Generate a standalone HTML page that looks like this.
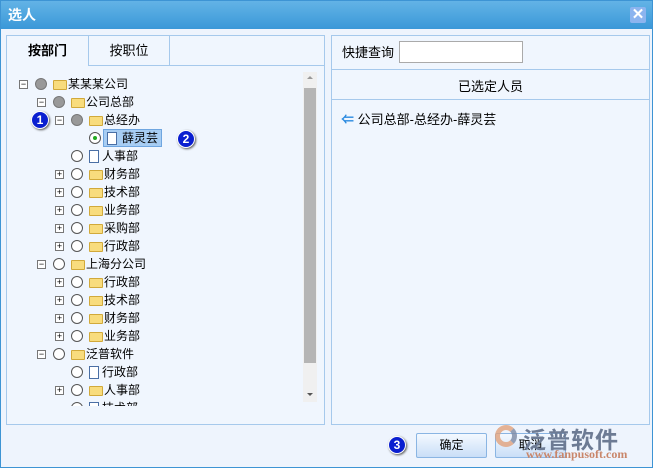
<!DOCTYPE html>
<html><head><meta charset="utf-8"><style>
*{margin:0;padding:0;box-sizing:border-box}
body{width:653px;height:468px;overflow:hidden;font:12px "Liberation Sans","Noto Sans CJK SC",sans-serif;color:#000;background:#fff}
.win{position:absolute;left:0;top:0;width:653px;height:468px;border:1px solid #3d94d4;background:#eef4fd}
.title{position:absolute;left:0;top:0;width:651px;height:28px;background:linear-gradient(#63b3e6,#3a98d8);color:#fff;font-weight:bold;font-size:14px;line-height:28px;padding-left:7px}
.close{position:absolute;left:629px;top:6px;width:16px;height:16px;background:#8cb4ef;border-radius:2px;color:#fff;font-size:15px;line-height:16px;text-align:center;font-weight:bold}
.panel{position:absolute;border:1px solid #a6c9ec;background:#f0f6fe}
.tab{position:absolute;top:0;height:30px;line-height:30px;text-align:center;font-size:13px;color:#000}
.row{position:absolute;height:18px;line-height:18px;font-size:12px;white-space:nowrap}
.ex{position:absolute;width:9px;height:9px;border:1px solid #777;background:#fff;font-size:9px;line-height:7px;text-align:center;color:#000}
.c{position:absolute;width:12px;height:12px;border-radius:50%;border:1px solid #555;background:#fff}
.c.g{background:#999;border-color:#777}
.f{position:absolute;width:14px;height:10px;background:#f8dc7d;border:1px solid #d1a93a;border-radius:1px}
.d{position:absolute;width:10px;height:13px;background:#fff;border:1px solid #4a6fa5}
.badge{position:absolute;width:18px;height:18px;border-radius:50%;background:#0a1fd0;color:#fff;font-weight:bold;text-align:center;line-height:16px;border:1px solid #fff;box-shadow:1px 1px 2px #555;font-size:12px}
.btn{position:absolute;top:432px;width:71px;height:25px;border:1px solid #8ab5e3;border-radius:2px;background:linear-gradient(#f4f9ff,#c9def7);text-align:center;line-height:23px}
</style></head><body><div class="win">
<div class="title">选人</div><div class="close">✕</div>
<div class="panel" style="left:5px;top:34px;width:319px;height:390px">
 <div style="position:absolute;left:0;top:29px;width:317px;border-top:1px solid #a6c9ec"></div>
 <div class="tab" style="left:0;width:81px;font-weight:bold;background:#f0f6fe;height:31px">按部门</div>
 <div class="tab" style="left:81px;width:82px;border-left:1px solid #a6c9ec;border-right:1px solid #a6c9ec">按职位</div>
 <div style="position:absolute;left:296px;top:36px;width:14px;height:330px;background:#f0f0f0"></div>
 <div style="position:absolute;left:297px;top:52px;width:12px;height:275px;background:#b5b5b5"></div>
 <div style="position:absolute;left:300px;top:40px;border:3px solid transparent;border-bottom-color:#999;border-top:0"></div>
 <div style="position:absolute;left:300px;top:357px;border:3px solid transparent;border-top-color:#555;border-bottom:0"></div>
</div>
<div id="tree"></div>
<div class="panel" style="left:330px;top:34px;width:319px;height:390px">
 <div style="position:absolute;left:10px;top:6px;font-size:13px">快捷查询</div>
 <div style="position:absolute;left:67px;top:5px;width:124px;height:22px;border:1px solid #aaa;background:#fff"></div>
 <div style="position:absolute;left:0;top:33px;width:317px;border-top:1px solid #a6c9ec"></div>
 <div style="position:absolute;left:0;top:40px;width:317px;text-align:center;font-size:13px">已选定人员</div>
 <div style="position:absolute;left:0;top:63px;width:317px;border-top:1px solid #a6c9ec"></div>
 <div style="position:absolute;left:9px;top:73px;font-size:13px"><span style="color:#2a8ae0;font-weight:bold">⇐</span> 公司总部-总经办-薛灵芸</div>
</div>
<div class="badge" style="left:387px;top:435px">3</div>
<div class="btn" style="left:415px">确定</div>
<div class="btn" style="left:494px">取消</div>
<div style="position:absolute;left:522px;top:420px;font-size:23px;color:#6d7b94;font-weight:bold;letter-spacing:1px">泛普软件</div>
<div style="position:absolute;left:525px;top:446px;font-size:12px;color:#c9866a;font-family:'Liberation Serif',serif;font-weight:bold">www.fanpusoft.com</div>
<div style="position:absolute;left:494px;top:424px;width:22px;height:22px;border-radius:50%;border:5px solid #e2a27c;border-right-color:#7d8aa5;opacity:.8"></div>
<div class="badge" style="left:30px;top:110px">1</div>
<div class="badge" style="left:176px;top:129px">2</div>
</div>
<script>
var rows=[[0,'-','g','f','某某某公司'],[1,'-','g','f','公司总部'],[2,'-','g','f','总经办'],[3,'','s','d','薛灵芸'],[2,'','w','d','人事部'],[2,'+','w','f','财务部'],[2,'+','w','f','技术部'],[2,'+','w','f','业务部'],[2,'+','w','f','采购部'],[2,'+','w','f','行政部'],[1,'-','w','f','上海分公司'],[2,'+','w','f','行政部'],[2,'+','w','f','技术部'],[2,'+','w','f','财务部'],[2,'+','w','f','业务部'],[1,'-','w','f','泛普软件'],[2,'','w','d','行政部'],[2,'+','w','f','人事部'],[2,'','w','d','技术部']];
var h='';rows.forEach(function(r,i){var y=74+i*18;if(y>400)return;var x=18+r[0]*18;
if(r[1])h+='<div class="ex" style="left:'+(x)+'px;top:'+(y+5)+'px">'+(r[1]=='-'?'−':'+')+'</div>';
h+='<div class="c '+(r[2]=='g'?'g':'')+'" style="left:'+(x+16)+'px;top:'+(y+3)+'px">'+(r[2]=='s'?'<div style="width:4px;height:4px;margin:3px;border-radius:50%;background:#2a2"></div>':'')+'</div>';
h+='<div class="'+r[3]+'" style="left:'+(x+34)+'px;top:'+(y+(r[3]=='f'?5:3))+'px"></div>';
h+='<div class="row" style="left:'+(x+(r[3]=='f'?49:47))+'px;top:'+y+'px;'+(r[2]=='s'?'background:#a7cdf3;border:1px solid #6fa6e0;padding:0 3px;line-height:16px;left:'+(x+30)+'px;padding-left:18px':'')+'">'+r[4]+'</div>';});
var t=document.getElementById('tree');t.innerHTML=h;t.style.cssText='position:absolute;left:0;top:0;width:300px;height:405px;overflow:hidden';
var d=t.querySelectorAll('.d');var s=t.querySelector('.row[style*=background]');if(s){s.parentNode.appendChild(d[0]);}
</script>
</body></html>
